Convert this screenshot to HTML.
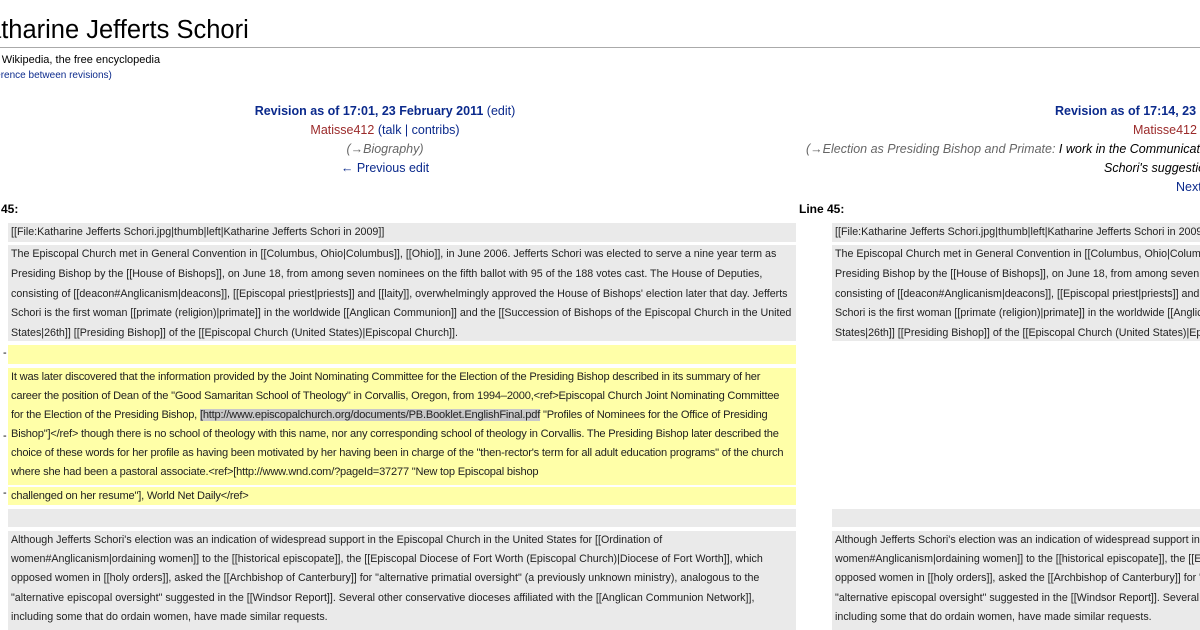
<!DOCTYPE html>
<html><head><meta charset="utf-8"><style>
html,body{margin:0;padding:0;width:1200px;height:630px;overflow:hidden;background:#fff;font-family:"Liberation Sans",Arial,sans-serif;color:#000;position:relative}
.a{position:absolute;white-space:nowrap;overflow:hidden}
.g{position:absolute;background:#eaeaea}
.y{position:absolute;background:#ffffa8}
.t{font-size:10.7px;line-height:19.5px;color:#222;padding-left:3px}
.b{color:#0b2a8c}
.r{color:#9b2a2a}
.h{font-weight:bold}
.c{text-align:center}
.hl{background:#c8c8c8}
.rh{font-size:12.5px;line-height:19px}
</style></head><body>
<div class="a" style="left:-30px;top:16px;font-size:25.5px;overflow:visible">Katharine Jefferts Schori</div>
<div class="a" style="left:0;top:47px;width:1200px;height:1px;background:#aaa"></div>
<div class="a" style="left:-27px;top:54px;font-size:11px;overflow:visible">From Wikipedia, the free encyclopedia</div>
<div class="a b" style="left:-23px;top:70px;font-size:10px;overflow:visible">(Difference between revisions)</div>

<div class="a c" style="left:185px;width:400px;top:102px;font-size:12.5px;line-height:19px">
<span class="b h">Revision as of 17:01, 23 February 2011</span> <span class="b">(edit)</span><br>
<span class="r">Matisse412</span> <span class="b">(talk | contribs)</span><br>
<i style="color:#666">(→Biography)</i><br>
<span class="b">← Previous edit</span></div>

<div class="a rh" style="left:1055px;top:102px;width:145px"><span class="b h">Revision as of 17:14, 23 February 2011</span></div>
<div class="a r rh" style="left:1133px;top:121px;width:67px">Matisse412 <span class="b">(talk | contribs)</span></div>
<div class="a rh" style="left:806px;top:140px;width:394px"><i style="color:#666">(→Election as Presiding Bishop and Primate:</i> <i>I work in the Communications office</i></div>
<div class="a rh" style="left:1104px;top:159px;width:96px"><i>Schori's suggestion</i></div>
<div class="a b rh" style="left:1176px;top:178px;width:24px">Next edit →</div>

<div class="a" style="left:-27px;top:202px;font-size:12px;font-weight:bold;overflow:visible">Line 45:</div>
<div class="a" style="left:799px;top:202px;font-size:12px;font-weight:bold">Line 45:</div>

<div class="g t a" style="left:8px;top:223px;width:785px;height:19px">[[File:Katharine Jefferts Schori.jpg|thumb|left|Katharine Jefferts Schori in 2009]]</div>
<div class="g t a" style="left:8px;top:245px;width:785px;height:96px;line-height:19.8px">The Episcopal Church met in General Convention in [[Columbus, Ohio|Columbus]], [[Ohio]], in June 2006. Jefferts Schori was elected to serve a nine year term as<br>Presiding Bishop by the [[House of Bishops]], on June 18, from among seven nominees on the fifth ballot with 95 of the 188 votes cast. The House of Deputies,<br>consisting of [[deacon#Anglicanism|deacons]], [[Episcopal priest|priests]] and [[laity]], overwhelmingly approved the House of Bishops' election later that day. Jefferts<br>Schori is the first woman [[primate (religion)|primate]] in the worldwide [[Anglican Communion]] and the [[Succession of Bishops of the Episcopal Church in the United<br>States|26th]] [[Presiding Bishop]] of the [[Episcopal Church (United States)|Episcopal Church]].</div>

<div class="a" style="left:3px;top:347px;font-size:11px">-</div>
<div class="y" style="left:8px;top:345px;width:788px;height:19px"></div>
<div class="a" style="left:3px;top:430px;font-size:11px">-</div>
<div class="y t a" style="left:8px;top:368px;width:785px;height:117px;line-height:19px;font-size:11.1px;letter-spacing:-0.2px">It was later discovered that the information provided by the Joint Nominating Committee for the Election of the Presiding Bishop described in its summary of her<br>career the position of Dean of the "Good Samaritan School of Theology" in Corvallis, Oregon, from 1994–2000,&lt;ref&gt;Episcopal Church Joint Nominating Committee<br>for the Election of the Presiding Bishop, <span class="hl">[http://www.episcopalchurch.org/documents/PB.Booklet.EnglishFinal.pdf</span> "Profiles of Nominees for the Office of Presiding<br>Bishop"]&lt;/ref&gt; though there is no school of theology with this name, nor any corresponding school of theology in Corvallis. The Presiding Bishop later described the<br>choice of these words for her profile as having been motivated by her having been in charge of the "then-rector's term for all adult education programs" of the church<br>where she had been a pastoral associate.&lt;ref&gt;[http://www.wnd.com/?pageId=37277 "New top Episcopal bishop</div>
<div class="a" style="left:3px;top:487px;font-size:11px">-</div>
<div class="y t a" style="left:8px;top:487px;width:785px;height:18px;line-height:18px;font-size:11.1px;letter-spacing:-0.2px">challenged on her resume"], World Net Daily&lt;/ref&gt;</div>

<div class="g" style="left:8px;top:509px;width:788px;height:18px"></div>
<div class="g t a" style="left:8px;top:531px;width:785px;height:99px;line-height:19.2px">Although Jefferts Schori's election was an indication of widespread support in the Episcopal Church in the United States for [[Ordination of<br>women#Anglicanism|ordaining women]] to the [[historical episcopate]], the [[Episcopal Diocese of Fort Worth (Episcopal Church)|Diocese of Fort Worth]], which<br>opposed women in [[holy orders]], asked the [[Archbishop of Canterbury]] for "alternative primatial oversight" (a previously unknown ministry), analogous to the<br>"alternative episcopal oversight" suggested in the [[Windsor Report]]. Several other conservative dioceses affiliated with the [[Anglican Communion Network]],<br>including some that do ordain women, have made similar requests.</div>

<div class="g t a" style="left:832px;top:223px;width:365px;height:19px">[[File:Katharine Jefferts Schori.jpg|thumb|left|Katharine Jefferts Schori in 2009]]</div>
<div class="g t a" style="left:832px;top:245px;width:365px;height:96px;line-height:19.8px">The Episcopal Church met in General Convention in [[Columbus, Ohio|Columbus]], [[Ohio]], in June 2006. Jefferts Schori was elected to serve a nine year term as<br>Presiding Bishop by the [[House of Bishops]], on June 18, from among seven nominees on the fifth ballot with 95 of the 188 votes cast. The House of Deputies,<br>consisting of [[deacon#Anglicanism|deacons]], [[Episcopal priest|priests]] and [[laity]], overwhelmingly approved the House of Bishops' election later that day. Jefferts<br>Schori is the first woman [[primate (religion)|primate]] in the worldwide [[Anglican Communion]] and the [[Succession of Bishops of the Episcopal Church in the United<br>States|26th]] [[Presiding Bishop]] of the [[Episcopal Church (United States)|Episcopal Church]].</div>
<div class="g" style="left:832px;top:509px;width:368px;height:18px"></div>
<div class="g t a" style="left:832px;top:531px;width:365px;height:99px;line-height:19.2px">Although Jefferts Schori's election was an indication of widespread support in the Episcopal Church in the United States for [[Ordination of<br>women#Anglicanism|ordaining women]] to the [[historical episcopate]], the [[Episcopal Diocese of Fort Worth (Episcopal Church)|Diocese of Fort Worth]], which<br>opposed women in [[holy orders]], asked the [[Archbishop of Canterbury]] for "alternative primatial oversight" (a previously unknown ministry), analogous to the<br>"alternative episcopal oversight" suggested in the [[Windsor Report]]. Several other conservative dioceses affiliated with the [[Anglican Communion Network]],<br>including some that do ordain women, have made similar requests.</div>
</body></html>
